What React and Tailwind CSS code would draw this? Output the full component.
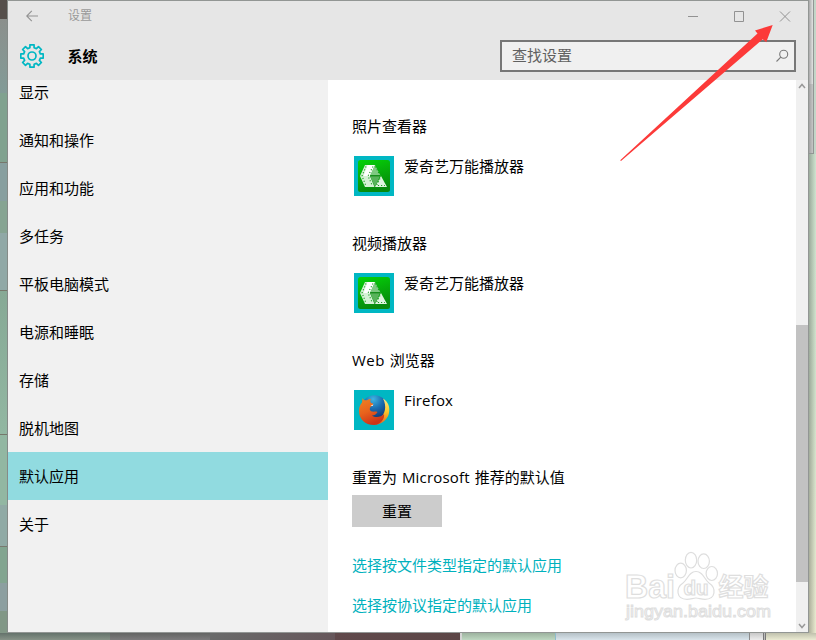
import React from "react";

const NAV_ITEMS = ["显示", "通知和操作", "应用和功能", "多任务", "平板电脑模式", "电源和睡眠", "存储", "脱机地图", "默认应用", "关于"];
const ACTIVE_ITEM = "默认应用";

const GEAR_PATH = (() => {
  const points = [];
  for (let i = 0; i < 8; i += 1) {
    const mid = (i * Math.PI) / 4;
    [[-0.25, 8.6], [-0.18, 11.4], [0.18, 11.4], [0.25, 8.6]].forEach(([offset, radius]) => {
      const a = mid + offset;
      points.push(`${(12 + radius * Math.sin(a)).toFixed(2)} ${(12 - radius * Math.cos(a)).toFixed(2)}`);
    });
  }
  return `M${points.join("L")}Z`;
})();

function GearIcon() {
  return (
    <svg className="h-6 w-6" viewBox="0 0 24 24" fill="none" stroke="#00b7c3" strokeWidth="1.700" strokeLinejoin="round">
      <path d={GEAR_PATH} />
      <circle cx="12" cy="12" r="4" />
    </svg>
  );
}

function PlayerIcon() {
  return (
    <svg className="h-10 w-10 shrink-0" viewBox="0 0 40 40">
      <defs>
        <linearGradient id="player" x1="0" y1="0" x2="0.3" y2="1">
          <stop offset="0" stopColor="#04d308" />
          <stop offset="1" stopColor="#078a0c" />
        </linearGradient>
      </defs>
      <rect width="40" height="40" fill="#00b7c3" />
      <rect x="4" y="4" width="32" height="32" rx="2.500" fill="url(#player)" />
      <path d="M11 9H21L16 20L20.500 31H11L6 20Z" fill="#d4f1d5" />
      <path d="M13.500 9H21L16 20L9.500 20Z" fill="#fff" />
      <path d="M21 9L26.500 19.500H16Z" fill="#7fc982" />
      <path d="M16 20H26L21 31Z" fill="#58b35b" />
      <path d="M27 20L33 31H21Z" fill="#dff3df" />
      <g fill="none" stroke="#159c1b" strokeWidth="1.100" strokeDasharray="1.100 2">
        <path d="M12 10.500L8 20L12 30" />
        <path d="M19 10.500L14 20L18.500 30" />
        <path d="M21.500 10.500L25.500 18.500" />
        <path d="M26 22.500L22.500 29.500H31" />
      </g>
      <path d="M16 19.800H26" stroke="#087c0d" strokeWidth="1" />
    </svg>
  );
}

function FirefoxIcon() {
  return (
    <svg className="h-10 w-10 shrink-0" viewBox="0 0 40 40">
      <defs>
        <radialGradient id="globe" cx="0.45" cy="0.15" r="0.8">
          <stop offset="0" stopColor="#3fb4e2" />
          <stop offset="0.45" stopColor="#1b6db0" />
          <stop offset="1" stopColor="#102f6b" />
        </radialGradient>
        <linearGradient id="fox" x1="0" y1="0" x2="0.4" y2="1">
          <stop offset="0" stopColor="#ee8424" />
          <stop offset="0.55" stopColor="#e8621c" />
          <stop offset="1" stopColor="#ce3418" />
        </linearGradient>
        <linearGradient id="tail" x1="0" y1="0" x2="0" y2="1">
          <stop offset="0" stopColor="#ffe98c" />
          <stop offset="0.5" stopColor="#fbc72c" />
          <stop offset="1" stopColor="#e9651c" />
        </linearGradient>
      </defs>
      <rect width="40" height="40" fill="#00b7c3" />
      <circle cx="20.500" cy="18.500" r="13.300" fill="url(#globe)" />
      <path d="M29 8.500C34 11.500 36.500 17 34.800 24C33 30 28 34 22 34.500L25 28.500C31.500 25 33 16 29 8.500Z" fill="url(#tail)" />
      <path d="M8.500 8C9.500 10 10.500 10.500 13 10.200C14 9.500 15.500 9 17 9C16 10 16 11.500 17 13C18.500 13.300 19.500 13.500 19 15L16.500 17C15 19 16 21 18 21.500C20 22 21.500 21 23.500 22C22.500 24.500 20 25.500 18 25.500C21 28 27 27.500 30 24C31 28 27 35 20 35C11 35 5 29 5 21C5 17 6 15 8 12.500Z" fill="url(#fox)" />
      <path d="M16.500 15.500L19.500 14.500L18.500 16Z" fill="#fff" />
    </svg>
  );
}

function Chevron({ down }) {
  return (
    <svg className="h-[6px] w-2" viewBox="0 0 8 6" fill="none" stroke="#999999" strokeWidth="1.500">
      <path d={down ? "M1 1L4 4.500L7 1" : "M1 5L4 1.500L7 5"} />
    </svg>
  );
}

function Header() {
  return (
    <header className="flex h-[79px] shrink-0 flex-col bg-[#e6e6e6]">
      <div className="flex h-[30px] items-center pl-[18px] pr-[17px] text-[#999999]">
        <svg className="h-3 w-3" viewBox="0 0 12 12" fill="none" stroke="#929292" strokeWidth="1.100">
          <path d="M12 6H.8M5.800 .8L.7 6L5.800 11.200" />
        </svg>
        <span className="ml-[30px] text-[12px] leading-none">设置</span>
        <svg className="ml-auto h-[11px] w-[103px]" viewBox="0 0 103 11" fill="none" stroke="#929292">
          <path d="M0 5.500H10M46.500 .5H55.500V10.500H46.500ZM92 .5L102 10.500M102 .5L92 10.500" />
        </svg>
      </div>
      <div className="flex h-[49px] items-center pl-3 pr-3">
        <GearIcon />
        <h1 className="ml-[23.5px] mt-[2px] text-[15px] font-bold leading-none">系统</h1>
        <div className="ml-auto flex h-8 w-[296px] items-center justify-between border-2 border-[#777777] bg-[#f0f0f0] pl-[10px] pr-[5px]">
          <span className="text-[15px] leading-none text-[#606060]">查找设置</span>
          <svg className="h-[14px] w-[14px]" viewBox="0 0 14 14" fill="none" stroke="#7a7a7a" strokeWidth="1.100">
            <circle cx="8.700" cy="5.300" r="4" />
            <path d="M5.800 8.200L1.500 12.500" />
          </svg>
        </div>
      </div>
    </header>
  );
}

function Sidebar() {
  return (
    <nav className="w-80 shrink-0 overflow-hidden bg-[#f1f1f1]">
      <ul className="-mt-3">
        {NAV_ITEMS.map((label) => (
          <li key={label} className={`flex h-12 items-center pl-[11px] ${label === ACTIVE_ITEM ? "bg-[#91dbe0]" : ""}`}>
            {label}
          </li>
        ))}
      </ul>
    </nav>
  );
}

function AppSection({ title, app, icon }) {
  return (
    <section className="h-[117px]">
      <h2 className="h-5 leading-5">{title}</h2>
      <div className="mt-5 flex gap-[10px] pl-[2px]">
        {icon}
        <span className="h-5 leading-5">{app}</span>
      </div>
    </section>
  );
}

function Watermark() {
  return (
    <svg className="absolute left-[617px] top-[545px] h-[82px] w-[162px]" viewBox="0 0 162 82" fill="#fff" stroke="#dedede" strokeWidth="1.200">
      <text x="8" y="52.500" fontSize="33" fontWeight="bold" fontFamily="'Liberation Sans', sans-serif" textLength="50" lengthAdjust="spacingAndGlyphs">Bai</text>
      <ellipse cx="63.700" cy="25.500" rx="5.700" ry="7.300" />
      <ellipse cx="74" cy="15.200" rx="5.700" ry="7.800" />
      <ellipse cx="86.700" cy="16.200" rx="5.700" ry="7.300" />
      <ellipse cx="94.800" cy="28.500" rx="5.700" ry="7" />
      <path d="M79 26.500C86 26.500 87 34 92 38C99.500 43 99 54.300 88 54.300C84 54.300 82 53 79 53C76 53 74 54.300 70 54.300C59 54.300 58.500 43 66 38C71 34 72 26.500 79 26.500Z" />
      <text x="66.500" y="49.500" fontSize="20" fontWeight="bold" fontFamily="'Liberation Sans', sans-serif" textLength="25" lengthAdjust="spacingAndGlyphs">du</text>
      <text x="101.500" y="51" fontSize="25" fontWeight="bold" fontFamily="'Noto Sans CJK SC', sans-serif">经验</text>
      <text x="9" y="72" fontSize="17" strokeWidth="1" fontFamily="'Liberation Sans', sans-serif" textLength="145" lengthAdjust="spacingAndGlyphs">jingyan.baidu.com</text>
    </svg>
  );
}

export default function App() {
  return (
    <div className="relative flex h-[640px] w-[816px] flex-col overflow-hidden font-['Open_Sans','Noto_Sans_CJK_SC',sans-serif] text-[15px] text-black">
      <div className="flex h-[633px] shrink-0">
        <div className="flex w-[7px] shrink-0 flex-col">
          <div className="h-[19px] bg-[#554f4b]" />
          <div className="h-[74px] bg-linear-to-b from-[#8b8f8c] to-[#829b97]" />
          <div className="h-[70px] border-b border-[#76776b] bg-[#80a28f]" />
          <div className="h-[38px] bg-[#879f9f]" />
          <div className="h-[32px] bg-[#86a492]" />
          <div className="h-[57px] bg-[#90a8a6]" />
          <div className="h-[145px] border-y border-[#76776b] bg-linear-to-b from-[#86a995] to-[#92b7a2]" />
          <div className="h-[70px] bg-[#92b7a2]" />
          <div className="h-[42px] border-b border-[#797a70] bg-[#90aaa5]" />
          <div className="h-[36px] bg-[#82a590]" />
          <div className="h-[28px] bg-[#8c9fa0]" />
          <div className="grow bg-[#819786]" />
        </div>
        <div className="flex w-[802px] shrink-0 flex-col border border-[#929694] border-l-[#858b88]">
          <Header />
          <div className="flex h-[552px]">
            <Sidebar />
            <main className="w-[468px] shrink-0 bg-white pl-6 pt-9">
              <AppSection title="照片查看器" app="爱奇艺万能播放器" icon={<PlayerIcon />} />
              <AppSection title="视频播放器" app="爱奇艺万能播放器" icon={<PlayerIcon />} />
              <AppSection title={<><span className="tracking-[0.5px]">Web</span><span className="ml-[1px]"> 浏览器</span></>} app={<span className="tracking-[0.15px]">Firefox</span>} icon={<FirefoxIcon />} />
              <h2 className="h-5 leading-5 [word-spacing:1px]">
                重置为 <span className="tracking-[0.2px]">Microsoft</span> 推荐的默认值
              </h2>
              <button className="mt-2 block h-8 w-[90px] bg-[#cccccc] text-center leading-8">重置</button>
              <div className="mt-[18px] flex flex-col text-[#00b1bd]">
                <a className="h-10 leading-10">选择按文件类型指定的默认应用</a>
                <a className="h-10 leading-10">选择按协议指定的默认应用</a>
              </div>
            </main>
            <div className="flex w-3 shrink-0 flex-col items-center bg-[#f0f0f0] pb-[3px] pt-[3px]">
              <Chevron />
              <div className="mt-[236px] h-[257px] w-3 bg-[#c2c2c2]" />
              <div className="mt-auto flex">
                <Chevron down />
              </div>
            </div>
          </div>
        </div>
        <div className="flex w-[7px] flex-col">
          <div className="flex h-[154px]">
            <div className="flex w-[5px] flex-col border-b border-r border-[#929694]">
              <div className="h-[84px] bg-linear-to-r from-[#a9a9a9] to-[#e3e3e3]" />
              <div className="grow bg-linear-to-r from-[#a2a2a2] to-[#c7c7c7]" />
            </div>
            <div className="grow bg-[#c3d6c8]" />
          </div>
          <div className="grow bg-linear-to-b from-[#cfe4d0] via-[#d2e3cd] to-[#eaebd0]">
            <div className="h-full bg-linear-to-r from-black/25 to-transparent" />
          </div>
        </div>
      </div>
      <div className="flex h-[7px] shrink-0">
        <div className="w-[110px] bg-linear-to-b from-[#64726b] to-[#879388]" />
        <div className="w-[100px] bg-linear-to-b from-[#636463] to-[#7d7c7d]" />
        <div className="w-[125px] bg-linear-to-r from-[#696a6a] to-[#66575b]" />
        <div className="w-[125px] bg-linear-to-r from-[#60494b] to-[#5c4646]" />
        <div className="w-[2px] bg-[#d5d5d5]" />
        <div className="w-[93px] bg-linear-to-b from-[#9db39f] to-[#bed7c1]" />
        <div className="w-px bg-[#8ebccc]" />
        <div className="w-[193px] bg-linear-to-b from-[#b5c1c7] to-[#d9e4eb]" />
        <div className="w-px bg-[#8b8b8b]" />
        <div className="w-[13px] bg-linear-to-b from-[#c8c8c8] to-[#ededed]" />
        <div className="w-[3px] border-x border-[#777] bg-[#bbb]" />
        <div className="grow bg-linear-to-b from-[#c0c1ad] to-[#ebebd3]" />
      </div>
      <Watermark />
      <svg className="absolute left-[615px] top-[20px] h-[145px] w-[165px]" viewBox="615 20 165 145" fill="#fc3a39">
        <path d="M772.700 25L766.200 42.200L762.700 39.200L621 161L620.200 160.200L757.500 33.500L755 30.500Z" />
      </svg>
    </div>
  );
}
